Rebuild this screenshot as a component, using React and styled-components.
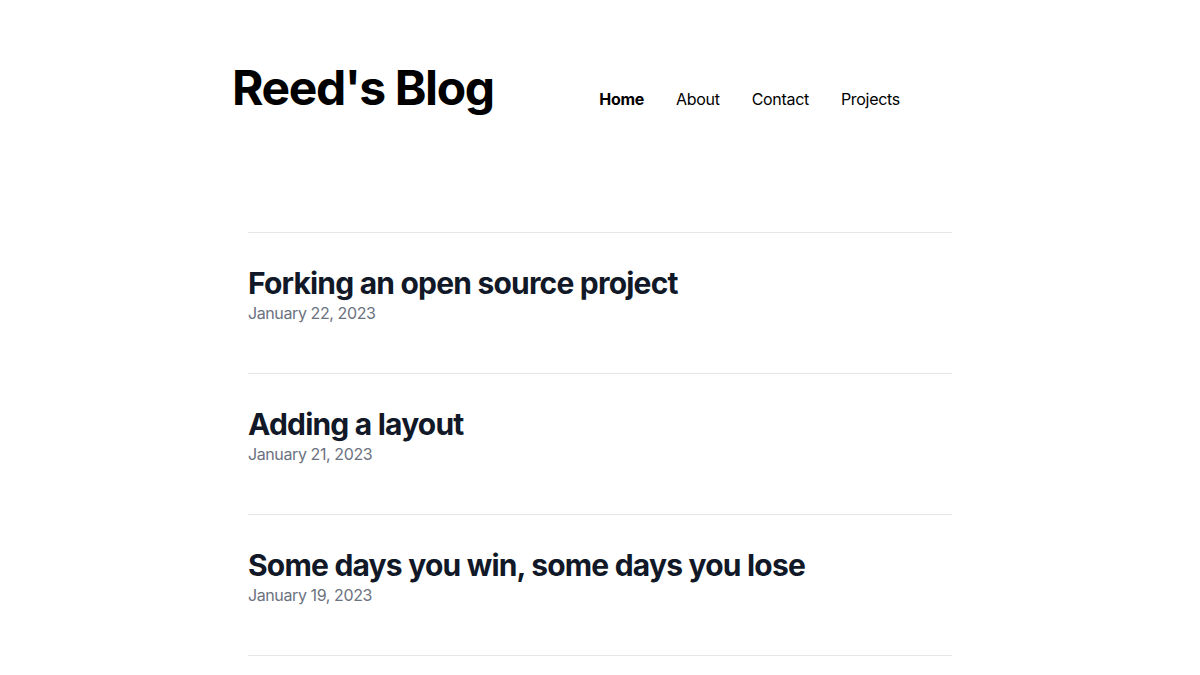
import React from "react";
import styled, { createGlobalStyle } from "styled-components";

const GlobalStyle = createGlobalStyle`
  body {
    margin: 0;
    background: #ffffff;
    font-family: Inter, "Liberation Sans", sans-serif;
  }
`;

const Page = styled.div`
  width: 1200px;
  min-height: 675px;
  overflow: hidden;
`;

const Header = styled.header`
  width: 736px;
  margin: 0 auto;
  padding-top: 64px;
  display: flex;
  align-items: baseline;
`;

const SiteTitle = styled.h1`
  margin: 0;
  font-size: 48px;
  line-height: 48px;
  font-weight: 700;
  color: #000000;
  letter-spacing: -1.4px;
`;

const Nav = styled.nav`
  display: flex;
  gap: 32px;
  margin-left: auto;
  margin-right: 68px;
`;

const NavLink = styled.a`
  font-size: 16px;
  line-height: 24px;
  color: #000000;
  text-decoration: none;
  letter-spacing: -0.3px;
  font-weight: ${(p) => (p.$active ? 700 : 400)};
`;

const Posts = styled.main`
  width: 704px;
  margin: 0 auto;
  padding-top: 120px;
`;

const Post = styled.article`
  border-top: 1px solid #e5e7eb;
  padding: 32px 0 48px;
  &:last-child {
    border-bottom: 1px solid #e5e7eb;
  }
`;

const PostTitle = styled.h2`
  margin: 0;
  font-size: 30px;
  line-height: 36px;
  font-weight: 700;
  color: #111827;
  letter-spacing: -0.8px;
`;

const PostDate = styled.p`
  margin: 0;
  font-size: 16px;
  line-height: 24px;
  color: #6b7280;
  letter-spacing: -0.4px;
`;

const links = ["Home", "About", "Contact", "Projects"];

const posts = [
  { title: "Forking an open source project", date: "January 22, 2023" },
  { title: "Adding a layout", date: "January 21, 2023" },
  { title: "Some days you win, some days you lose", date: "January 19, 2023" },
];

export default function App() {
  return (
    <Page>
      <GlobalStyle />
      <Header>
        <SiteTitle>Reed's Blog</SiteTitle>
        <Nav>
          {links.map((l, i) => (
            <NavLink key={l} href="#" $active={i === 0}>
              {l}
            </NavLink>
          ))}
        </Nav>
      </Header>
      <Posts>
        {posts.map((p) => (
          <Post key={p.title}>
            <PostTitle>{p.title}</PostTitle>
            <PostDate>{p.date}</PostDate>
          </Post>
        ))}
      </Posts>
    </Page>
  );
}
